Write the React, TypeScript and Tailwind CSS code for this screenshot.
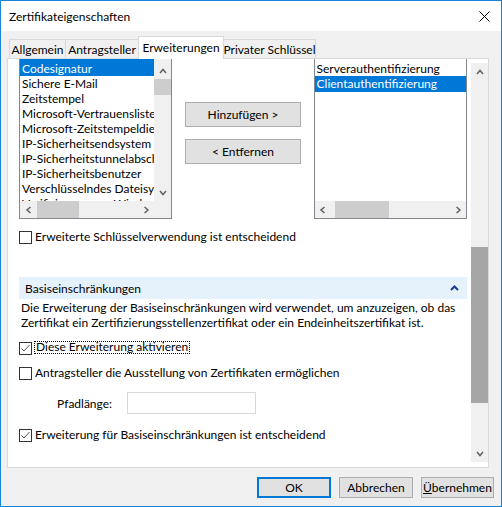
import React from "react";

type Dir = "up" | "down" | "left" | "right";

function Chevron({ dir, color = "#606060", size = 8 }: { dir: Dir; color?: string; size?: number }) {
  const pts: Record<Dir, string> = {
    up: "1,6 4,2.5 7,6",
    down: "1,2 4,5.5 7,2",
    left: "5.5,1 2,4 5.5,7",
    right: "2.5,1 6,4 2.5,7",
  };
  return (
    <svg width={size} height={size} viewBox="0 0 8 8" className="block">
      <polyline points={pts[dir]} fill="none" stroke={color} strokeWidth="1.5" />
    </svg>
  );
}

function Checkbox({ checked }: { checked?: boolean }) {
  return (
    <span className="flex h-[13px] w-[13px] shrink-0 items-center justify-center border border-[#333333] bg-white">
      {checked && (
        <svg width="11" height="11" viewBox="0 0 11 11" className="block">
          <polyline points="1.5,5.5 4,8 9.5,2" fill="none" stroke="#505050" strokeWidth="1" />
        </svg>
      )}
    </span>
  );
}

function HScroll({ thumbLeft, thumbWidth }: { thumbLeft: number; thumbWidth: number }) {
  return (
    <div className="relative flex h-[17px] items-center justify-between bg-[#f0f0f0]">
      <span className="flex w-[17px] justify-center">
        <Chevron dir="left" />
      </span>
      <span className="absolute top-0 h-[17px] bg-[#cdcdcd]" style={{ left: thumbLeft, width: thumbWidth }} />
      <span className="flex w-[17px] justify-center">
        <Chevron dir="right" />
      </span>
    </div>
  );
}

const leftItems = [
  "Sichere E-Mail",
  "Zeitstempel",
  "Microsoft-Vertrauenslistensignatur",
  "Microsoft-Zeitstempeldienst",
  "IP-Sicherheitsendsystem",
  "IP-Sicherheitstunnelabschluss",
  "IP-Sicherheitsbenutzer",
  "Verschlüsselndes Dateisystem",
  "Verifizierung von Windows-Hardwaretreibern",
];

const tabs = [
  { label: "Allgemein", w: "w-[57px]" },
  { label: "Antragsteller", w: "w-[74px]" },
  { label: "Erweiterungen", w: "w-[86px]", active: true },
  { label: "Privater Schlüssel", w: "w-[93px]" },
];

export default function App() {
  return (
    <div className="flex h-[507px] w-[502px] flex-col overflow-hidden whitespace-nowrap border border-[#1883d7] bg-[#f0f0f0] font-['Lato',sans-serif] text-[12px] leading-[15px] text-black">
      {/* title bar */}
      <div className="flex h-[30px] shrink-0 items-center justify-between bg-white pl-[8px] pr-[11px]">
        <span className="text-[12px]">Zertifikateigenschaften</span>
        <svg width="11" height="11" viewBox="0 0 11 11" className="block">
          <path d="M0.5 0.5 L10.5 10.5 M10.5 0.5 L0.5 10.5" stroke="#000" strokeWidth="1" />
        </svg>
      </div>

      {/* tabs */}
      <div className="flex h-[27px] shrink-0 items-end pl-[8px] pt-[5px]">
        {tabs.map((tab) =>
          tab.active ? (
            <div
              key={tab.label}
              className={`relative z-10 -mb-px -ml-px flex h-[23px] ${tab.w} items-start justify-center border border-b-0 border-[#d9d9d9] bg-white pt-[3px]`}
            >
              {tab.label}
            </div>
          ) : (
            <div
              key={tab.label}
              className={`-ml-px flex h-[19px] ${tab.w} items-center justify-center border border-b-0 border-[#d9d9d9] bg-[#f0f0f0] pt-[1px] first:ml-0`}
            >
              {tab.label}
            </div>
          )
        )}
      </div>

      {/* panel */}
      <div className="ml-[6px] flex h-[410px] w-[482px] shrink-0 border border-[#d9d9d9] bg-white">
        <div className="relative flex-1 overflow-hidden">
          <div className="-mt-px flex flex-col pl-[11px] pr-[4px]">
            {/* list area */}
            <div className="flex items-start">
              <div className="flex h-[161px] w-[153px] flex-col border border-[#828790] bg-white">
                <div className="flex h-[142px]">
                  <div className="flex w-[134px] flex-col overflow-hidden">
                    <div className="flex h-[17px] shrink-0 items-end bg-[#0078d7] pl-[2px] text-white">Codesignatur</div>
                    {leftItems.map((item) => (
                      <div key={item} className="flex h-[15px] shrink-0 items-end pl-[2px]">
                        {item}
                      </div>
                    ))}
                  </div>
                  <div className="flex w-[17px] flex-col bg-[#f0f0f0]">
                    <span className="flex h-[19px] items-center justify-center pt-[4px]">
                      <Chevron dir="up" />
                    </span>
                    <span className="mt-px h-[16px] bg-[#cdcdcd]" />
                    <span className="flex-1" />
                    <span className="flex h-[17px] items-center justify-center">
                      <Chevron dir="down" />
                    </span>
                  </div>
                </div>
                <div className="flex">
                  <div className="w-[134px]">
                    <HScroll thumbLeft={17} thumbWidth={42} />
                  </div>
                  <div className="h-[17px] w-[17px] bg-[#f0f0f0]" />
                </div>
              </div>

              <div className="flex w-[142px] flex-col items-start gap-[12px] pl-[13px] pt-[44px]">
                <button className="flex h-[25px] w-[116px] items-center justify-center border border-[#adadad] bg-[#e1e1e1]">
                  Hinzufügen &gt;
                </button>
                <button className="flex h-[25px] w-[116px] items-center justify-center border border-[#adadad] bg-[#e1e1e1]">
                  &lt; Entfernen
                </button>
              </div>

              <div className="flex h-[161px] w-[154px] flex-col border border-[#828790] bg-white">
                <div className="flex h-[142px] flex-col">
                  <div className="flex h-[17px] shrink-0 items-end pl-[2px]">Serverauthentifizierung</div>
                  <div className="flex h-[16px] shrink-0 items-end bg-[#0078d7] pb-px pl-[2px] text-white">Clientauthentifizierung</div>
                </div>
                <HScroll thumbLeft={20} thumbWidth={54} />
              </div>
            </div>

            <label className="mt-[12px] flex h-[13px] items-center gap-[3px]">
              <Checkbox />
              <span className="pb-[2px]">Erweiterte Schlüsselverwendung ist entscheidend</span>
            </label>

            <div className="mt-[33px] flex h-[22px] w-[448px] items-center justify-between bg-[#e5f1fb] pl-[6px] pr-[8px]">
              <span>Basiseinschränkungen</span>
              <svg width="9" height="6" viewBox="0 0 9 6" className="block">
                <polyline points="1,5 4.5,1.5 8,5" fill="none" stroke="#1b3f8f" strokeWidth="2" />
              </svg>
            </div>

            <p className="mt-px pl-[2px] leading-[15px]">
              Die Erweiterung der Basiseinschränkungen wird verwendet, um anzuzeigen, ob das
              <br />
              Zertifikat ein Zertifizierungsstellenzertifikat oder ein Endeinheitszertifikat ist.
            </p>

            <label className="mt-[12px] flex h-[13px] items-center gap-[2px]">
              <Checkbox checked />
              <span className="-mt-[2px] flex h-[13px] items-center border border-dotted border-black px-px pb-[2px]">
                Diese Erweiterung aktivieren
              </span>
            </label>

            <label className="mt-[12px] flex h-[13px] items-center gap-[3px]">
              <Checkbox />
              <span className="pb-[2px]">Antragsteller die Ausstellung von Zertifikaten ermöglichen</span>
            </label>

            <div className="mt-[12px] flex h-[22px] items-center pl-[38px]">
              <span className="w-[70px]">Pfadlänge:</span>
              <div className="h-[22px] w-[129px] border border-[#d9d9d9] bg-white" />
            </div>

            <label className="mt-[15px] flex h-[13px] items-center gap-[3px]">
              <Checkbox checked />
              <span className="pb-[2px]">Erweiterung für Basiseinschränkungen ist entscheidend</span>
            </label>
          </div>
        </div>

        {/* panel scrollbar */}
        <div className="flex w-[17px] flex-col pb-[5px] pt-[4px]">
          <div className="flex flex-1 flex-col bg-[#f0f0f0]">
            <span className="flex h-[17px] items-center justify-center">
              <Chevron dir="up" />
            </span>
            <span className="mt-[167px] h-[156px] bg-[#a6a6a6]" />
            <span className="flex-1" />
            <span className="flex h-[17px] items-center justify-center">
              <Chevron dir="down" />
            </span>
          </div>
        </div>
      </div>

      {/* dialog buttons */}
      <div className="mt-[9px] flex justify-end gap-[8px] pr-[7px]">
        <button className="flex h-[21px] w-[74px] items-center justify-center border-2 border-[#0078d7] bg-[#e1e1e1]">OK</button>
        <button className="flex h-[21px] w-[74px] items-center justify-center border border-[#adadad] bg-[#e1e1e1]">Abbrechen</button>
        <button className="flex h-[21px] w-[73px] items-center justify-center border border-[#adadad] bg-[#e1e1e1]">
          <span>
            <u>Ü</u>bernehmen
          </span>
        </button>
      </div>
    </div>
  );
}
